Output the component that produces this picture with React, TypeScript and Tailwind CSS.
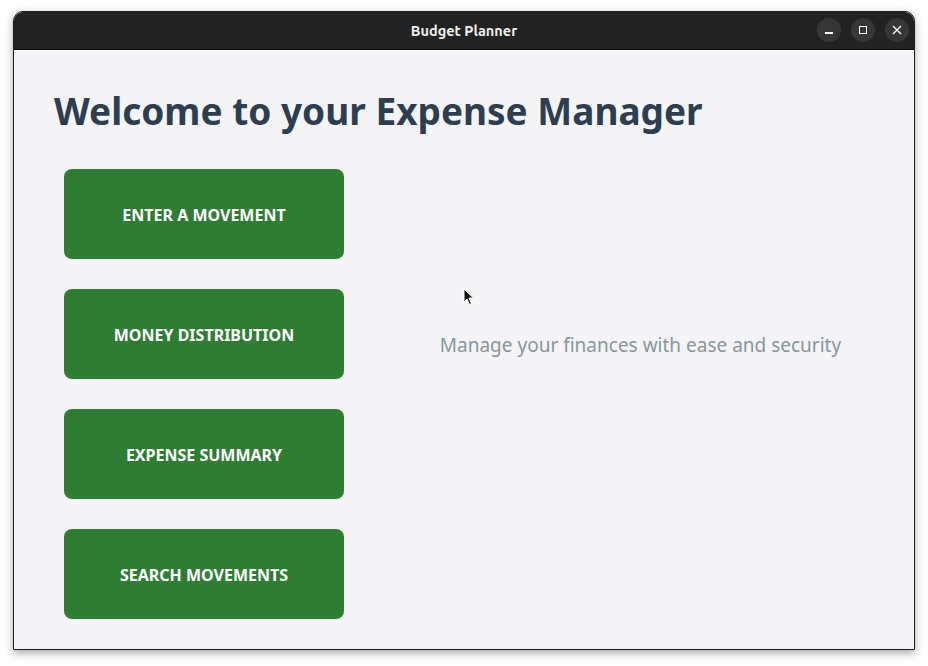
import React from 'react'

const buttons = ['ENTER A MOVEMENT', 'MONEY DISTRIBUTION', 'EXPENSE SUMMARY', 'SEARCH MOVEMENTS']

export default function App() {
  return (
    <div className="w-[928px] h-[666px] bg-white pt-[11px] pl-[13px]" style={{ fontFamily: '"Noto Sans", sans-serif' }}>
      <div className="relative w-[902px] h-[639px] flex flex-col rounded-t-[10px] overflow-hidden border border-[#1c1c1c] shadow-[0_3px_8px_rgba(0,0,0,0.35)]">
        {/* Title bar */}
        <div className="h-[37px] bg-[#222222] flex items-center justify-center relative shrink-0">
          <span className="text-[14.5px] font-bold text-[#f0f0f0] font-['Ubuntu','Noto_Sans',sans-serif]">Budget Planner</span>
          <div className="absolute right-[5px] top-[6px] flex gap-[10px]">
            <div className="w-[24px] h-[24px] rounded-full bg-[#363636] flex items-center justify-center">
              <div className="w-[8px] h-[1.5px] bg-white mt-[6px]" />
            </div>
            <div className="w-[24px] h-[24px] rounded-full bg-[#363636] flex items-center justify-center">
              <div className="w-[8px] h-[8px] border border-white" />
            </div>
            <div className="w-[24px] h-[24px] rounded-full bg-[#363636] flex items-center justify-center">
              <svg width="10" height="10" viewBox="0 0 10 10" stroke="white" strokeWidth="1.3">
                <path d="M1 1L9 9M9 1L1 9" />
              </svg>
            </div>
          </div>
        </div>

        {/* Content */}
        <div className="flex-1 bg-[#f4f4f6] border-t border-[#111] flex flex-col">
          <h1 className="pl-[40px] pt-[36px] text-[37px] leading-[50px] font-bold text-[#2c3e50]">Welcome to your Expense Manager</h1>
          <div className="flex mt-[33px]">
            <div className="ml-[50px] flex flex-col gap-[30px]">
              {buttons.map(b => (
                <button key={b} className="w-[280px] h-[90px] pt-[2px] rounded-[8px] bg-[#2e7d32] text-white text-[16px] font-bold">
                  {b}
                </button>
              ))}
            </div>
            <div className="flex-1 flex items-center justify-center pl-[23px] pb-[98px]">
              <span className="text-[19px] text-[#8a959b]">Manage your finances with ease and security</span>
            </div>
          </div>
        </div>

        {/* Cursor */}
        <svg className="absolute left-[449px] top-[276px]" width="12" height="18" viewBox="0 0 12 18">
          <path d="M1 1L1 14L4 11L6.5 16.5L8.5 15.5L6 10L10.5 10Z" fill="#111" stroke="white" strokeWidth="1" />
        </svg>
      </div>
    </div>
  )
}
